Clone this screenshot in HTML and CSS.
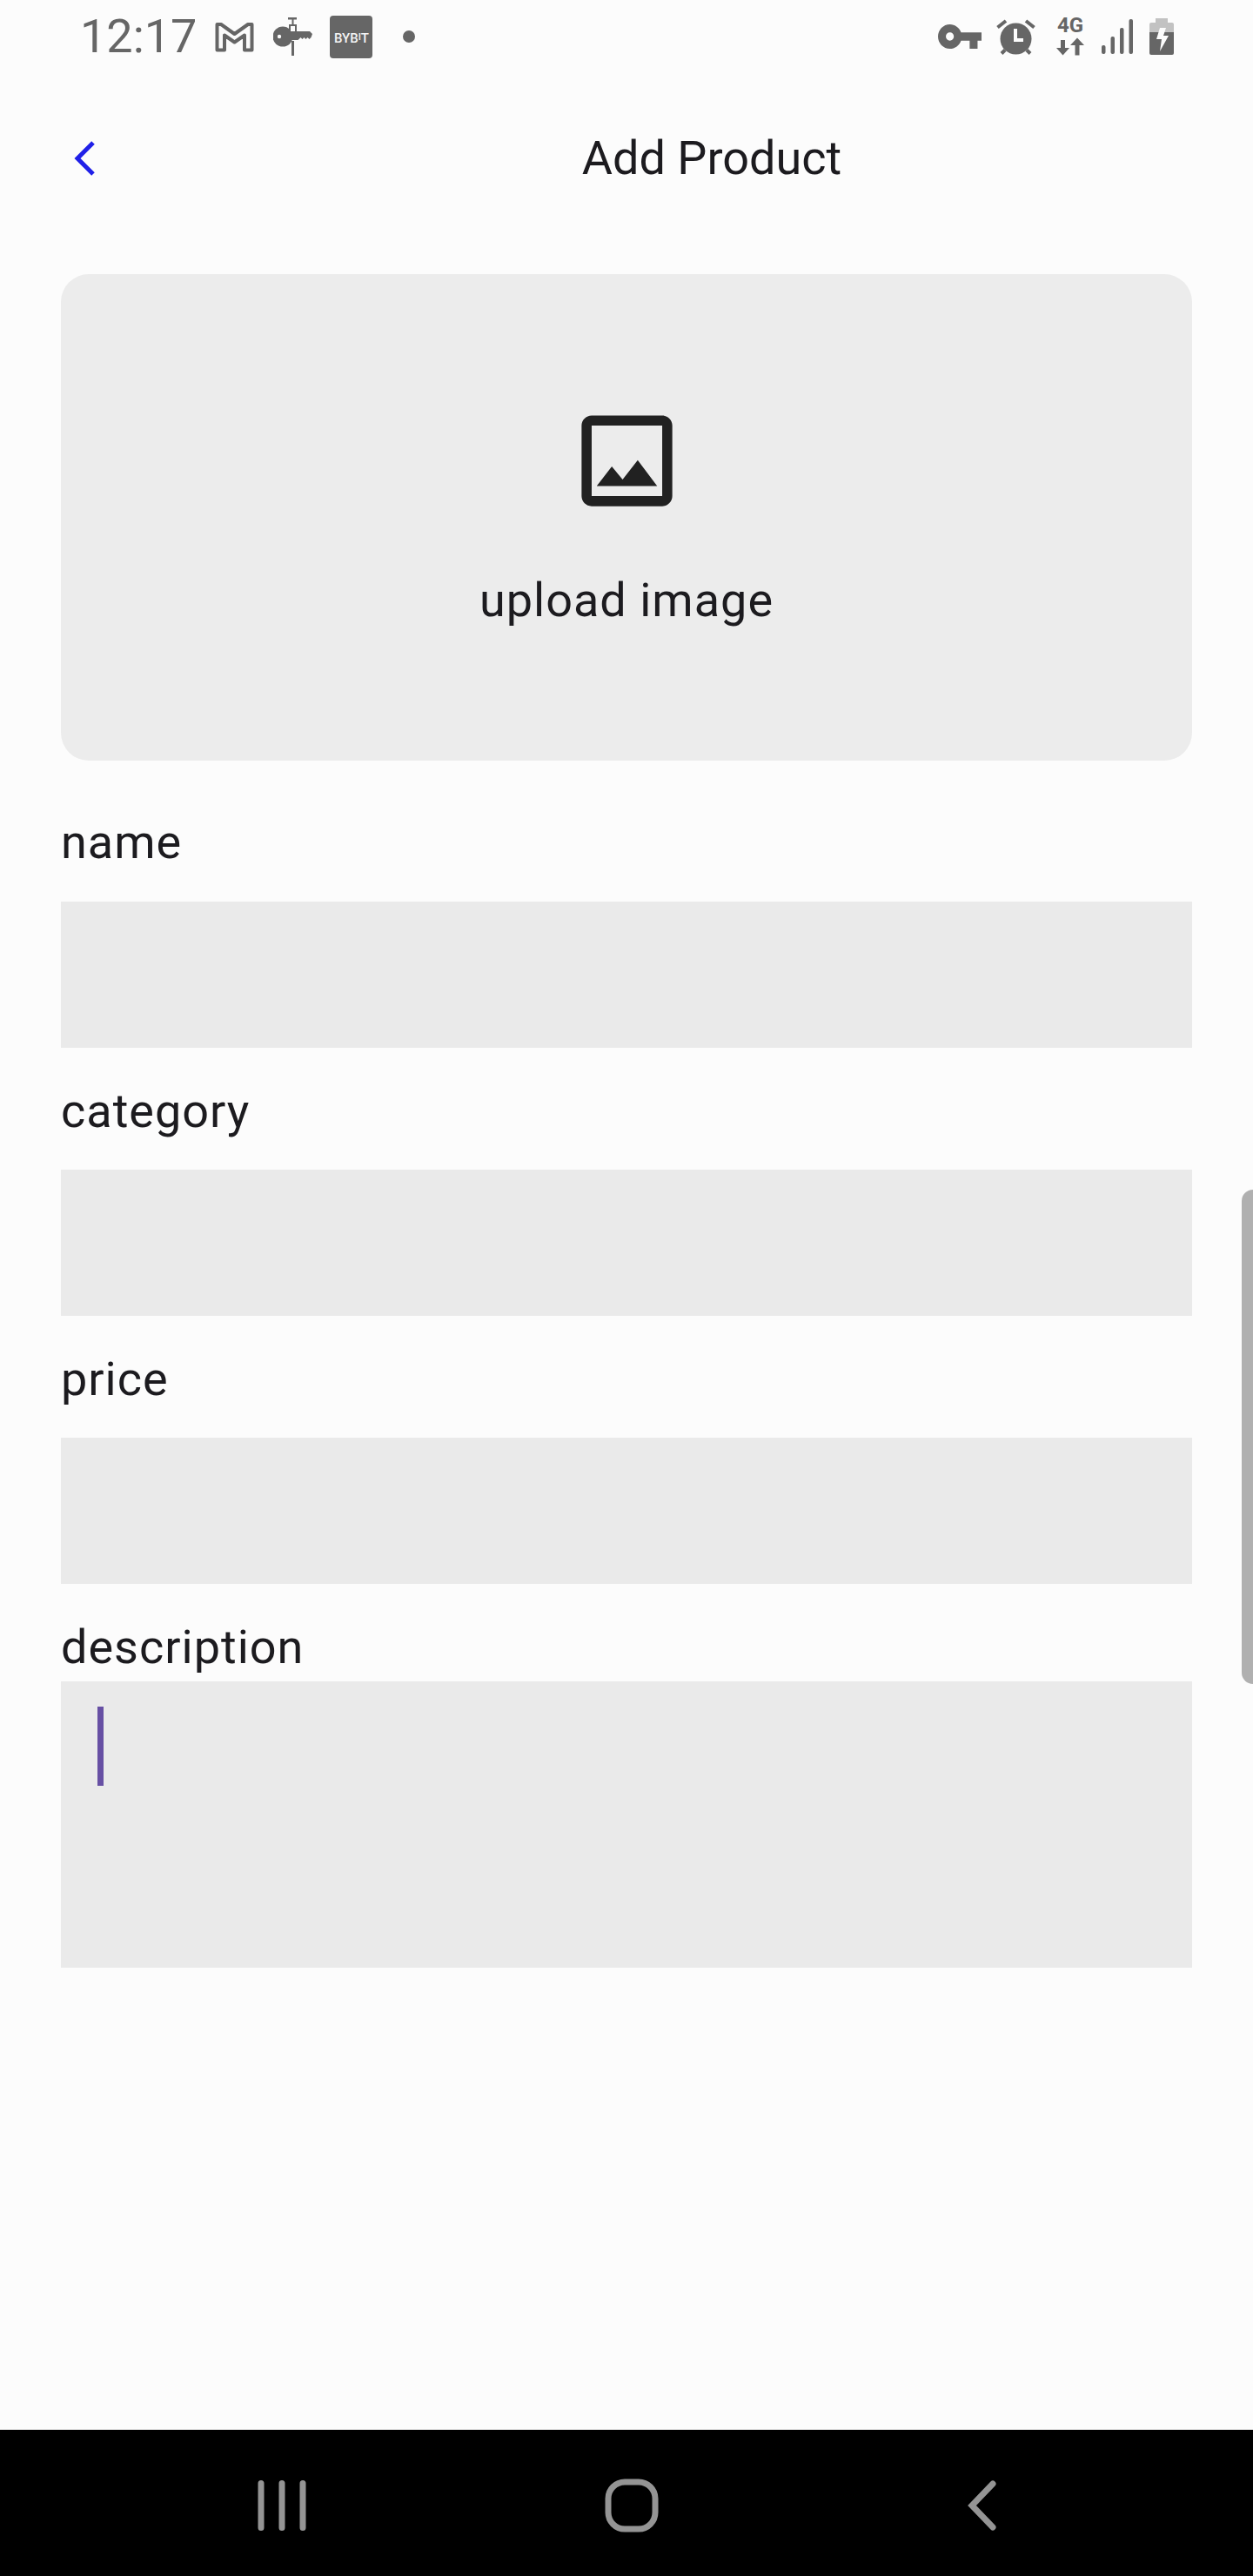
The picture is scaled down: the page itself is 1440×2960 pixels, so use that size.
FILE: index.html
```html
<!DOCTYPE html>
<html lang="en">
<head>
<meta charset="utf-8">
<title>Add Product</title>
<link rel="stylesheet" href="styles.css">
</head>
<body>
<div class="screen">
  <div class="status-bar">
    <div class="status-left">
      <span class="clock">12:17</span>
      <svg class="ic-gmail" width="45" height="35" viewBox="0 0 45 35"><path d="M2.500 3H7L22.500 14 38 3h4.500V32.500H34V15.500L22.500 23.500 11 15.500V32.500H2.500Z" fill="none" stroke="#666" stroke-width="4" stroke-linejoin="round"/></svg>
      <svg class="ic-keyshot" width="45" height="44" viewBox="0 0 45 44"><circle cx="11" cy="22" r="11.500" fill="#666"/><path d="M14 16h28l3 3-1.500 4-2 2-2-2-2 2-2-2-2 2-2-2-3 3H14Z" fill="#666"/><path d="M17 0h10v2.500h-3.500V8H27v10H18V8h3.500V2.500H17Z" fill="#666"/><rect x="21" y="27" width="3" height="17" fill="#666"/><rect x="20" y="10" width="5" height="6" fill="#fcfcfc"/><circle cx="7" cy="22" r="2.200" fill="#fcfcfc"/></svg>
      <span class="bybit">BYB<span class="bybit-i">I</span>T</span>
      <span class="dot"></span>
    </div>
    <div class="status-right">
      <svg class="ic-key" width="50" height="28" viewBox="1 6 22 12" preserveAspectRatio="none"><path d="M12.650 10C11.830 7.670 9.610 6 7 6c-3.310 0-6 2.690-6 6s2.690 6 6 6c2.610 0 4.830-1.670 5.650-4H17v4h4v-4h2v-4H12.650zM7 14c-1.100 0-2-.9-2-2s.9-2 2-2 2 .9 2 2-.9 2-2 2z" fill="#666"/></svg>
      <svg class="ic-alarm" width="45" height="41" viewBox="0 0 45 41"><circle cx="22.500" cy="22.500" r="18" fill="#666"/><path d="M1.500 9.500 11 2M43.500 9.500 34 2M6 39.500l4-4M39 39.500l-4-4" stroke="#666" stroke-width="4" fill="none"/><path d="M22 11v13h9" stroke="#fcfcfc" stroke-width="4" fill="none"/></svg>
      <div class="net">
        <span class="net-label">4G</span>
        <svg width="32" height="21" viewBox="0 0 32 21"><path d="M5 3h5v9h5l-7.500 8.500L0 12h5ZM21.500 20.500h5V9H32L24 .5 16 9h5.500Z" fill="#666"/></svg>
      </div>
      <svg class="ic-signal" width="36" height="40" viewBox="0 0 36 40"><rect x="0" y="30" width="4.500" height="10" rx="2" fill="#666"/><rect x="10.500" y="20" width="4.500" height="20" rx="2" fill="#666"/><rect x="21" y="10" width="4.500" height="30" rx="2" fill="#666"/><rect x="31.500" y="0" width="4.500" height="40" rx="2" fill="#666"/></svg>
      <svg class="ic-battery" width="28" height="42" viewBox="0 0 28 42"><path d="M7 0h14v5h5a2 2 0 0 1 2 2v9H0V7a2 2 0 0 1 2-2h5Z" fill="#c2c2c2"/><path d="M0 16h28v24a2 2 0 0 1-2 2H2a2 2 0 0 1-2-2Z" fill="#666"/><path d="M12 11h7l-3 9h6L12 38l2-14H8Z" fill="#fcfcfc"/></svg>
    </div>
  </div>

  <header class="app-bar">
    <svg class="back" width="24" height="40" viewBox="0 0 24 40"><path d="M22 2 4 20l18 18" fill="none" stroke="#2020e8" stroke-width="5"/></svg>
    <h1 class="title">Add Product</h1>
  </header>

  <main class="form">
    <div class="upload">
      <svg class="upload-icon" width="139" height="139" viewBox="0 0 24 24"><path d="M19 5v14H5V5h14m0-2H5c-1.100 0-2 .9-2 2v14c0 1.100.9 2 2 2h14c1.100 0 2-.9 2-2V5c0-1.100-.9-2-2-2zm-4.860 8.860l-3 3.870L9 13.140 6 17h12l-3.860-5.140z" fill="#212121"/></svg>
      <span class="upload-text">upload image</span>
    </div>
    <label class="label label-first">name</label>
    <div class="field"></div>
    <label class="label">category</label>
    <div class="field"></div>
    <label class="label">price</label>
    <div class="field"></div>
    <label class="label label-tight">description</label>
    <div class="field field-area"><span class="caret"></span></div>
  </main>

  <div class="scrollbar"></div>

  <nav class="nav-bar">
    <svg class="nav-recents" width="56" height="58" viewBox="0 0 56 58"><path d="M4 3.500v51M28 3.500v51M52 3.500v51" stroke="#949494" stroke-width="7" stroke-linecap="round"/></svg>
    <svg class="nav-home" width="62" height="62" viewBox="0 0 62 62"><rect x="4" y="4" width="54" height="54" rx="19" fill="none" stroke="#949494" stroke-width="7"/></svg>
    <svg width="34" height="58" viewBox="0 0 34 58"><path d="M29 4 5 29l24 25" fill="none" stroke="#949494" stroke-width="7" stroke-linecap="round"/></svg>
  </nav>
</div>
</body>
</html>
```

FILE: styles.css
```css
* { box-sizing: border-box; }

html, body {
  margin: 0;
  padding: 0;
  background: #fcfcfc;
}

.screen {
  position: relative;
  width: 1440px;
  height: 2960px;
  display: flex;
  flex-direction: column;
  font-family: Roboto, "Liberation Sans", sans-serif;
  color: #1c1b1f;
  background: #fcfcfc;
  overflow: hidden;
}

/* status bar */
.status-bar {
  height: 84px;
  flex: none;
  display: flex;
  justify-content: space-between;
  align-items: center;
  padding: 0 91px 0 92px;
}

.status-left, .status-right {
  display: flex;
  align-items: center;
}

.clock {
  font-size: 54px;
  line-height: 60px;
  color: #666;
  margin-right: 21px;
}

.ic-gmail { margin-right: 22px; }
.ic-keyshot { margin-right: 20px; }

.bybit {
  width: 49px;
  height: 49px;
  background: #666;
  border-radius: 4px;
  color: #f4f4f4;
  font-size: 15px;
  font-weight: 500;
  line-height: 49px;
  text-align: center;
  margin-right: 35px;
}

.bybit-i {
  font-size: 11px;
  vertical-align: 3px;
}

.dot {
  width: 14px;
  height: 14px;
  border-radius: 50%;
  background: #666;
}

.ic-key { margin-right: 17px; }
.ic-alarm { margin-right: 24px; }

.net {
  width: 32px;
  margin-right: 20px;
  display: flex;
  flex-direction: column;
  align-items: center;
  gap: 5px;
}

.net-label {
  font-size: 24px;
  font-weight: 700;
  line-height: 17px;
  color: #666;
}

.ic-signal { margin-right: 19px; }

/* app bar */
.app-bar {
  position: relative;
  height: 192px;
  flex: none;
  display: flex;
  align-items: center;
  justify-content: center;
  padding-top: 4px;
}

.back {
  position: absolute;
  left: 85px;
  top: 78px;
}

.title {
  margin: 0;
  font-size: 54px;
  font-weight: 400;
  line-height: 60px;
  padding-left: 196px;
}

/* form */
.form {
  flex: 1;
  padding: 39px 70px 0;
  display: flex;
  flex-direction: column;
}

.upload {
  height: 559px;
  background: #ececec;
  border-radius: 32px;
  display: flex;
  flex-direction: column;
  align-items: center;
  padding-top: 145px;
}

.upload-text {
  margin-top: 61px;
  font-size: 54px;
  line-height: 60px;
  letter-spacing: 1px;
}

.label {
  display: block;
  font-size: 54px;
  line-height: 60px;
  letter-spacing: 1px;
  margin-top: 43px;
  margin-bottom: 37px;
}

.label-first {
  margin-top: 64px;
  margin-bottom: 38px;
}

.label-tight { margin-bottom: 9px; }

.field {
  height: 168px;
  background: #eaeaea;
}

.field-area {
  height: 329px;
  padding: 29px 42px;
}

.caret {
  display: block;
  width: 7px;
  height: 91px;
  background: #6750a4;
}

.scrollbar {
  position: absolute;
  right: 0;
  top: 1367px;
  width: 13px;
  height: 568px;
  background: #b0b0b0;
  border-radius: 13px 0 0 13px;
}

/* system navigation */
.nav-bar {
  height: 168px;
  flex: none;
  background: #000;
  display: flex;
  align-items: center;
  padding: 6px 0 0 296px;
}

.nav-recents { margin-right: 343px; }
.nav-home { margin-right: 355px; }
```
